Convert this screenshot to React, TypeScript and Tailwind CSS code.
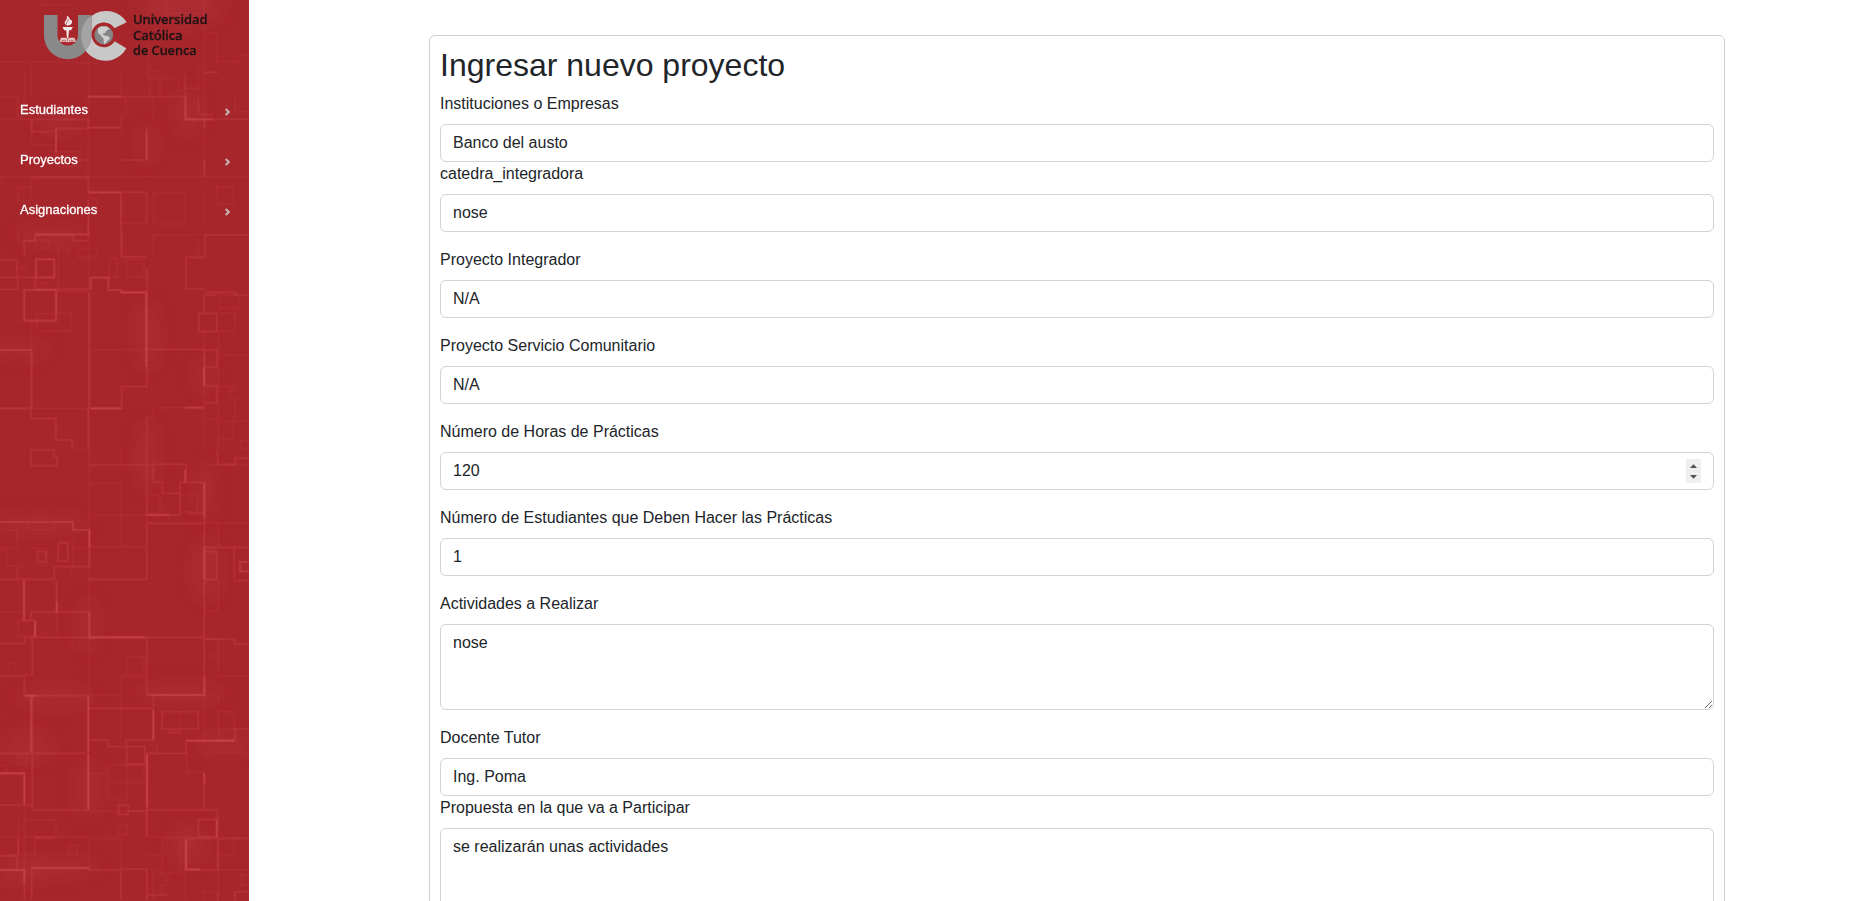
import type { ReactNode } from "react";

const TOP_LINES = [
  { o: 0.3, d: "M0 186H235V190H295M265 155V290V530M450 290V235H535V270H550M95 186V290M73 217V315M0 290H53V350H73M0 358H95M95 358V435H163M265 383H363V345H378V290M363 217V290M613 0V480M613 100H650V185H720V165H747M595 195V265H555M500 0V40H595M445 135V235M460 290V358M265 300V480M163 455H240V500H163M445 238V212H480V290M613 480V530M0 530H613M440 670H363V577M95 530V600H55V562H95M105 705H265V577M462 578H555V672H462ZM613 530H747M613 575V672M650 560H700V612H650ZM705 290V335H747M120 0V15H230M265 60V186M265 595H292V640H265M613 383V345M0 530V560" },
  { o: 0.55, d: "M555 220V358H613V383M265 290H555M440 400V480H363M265 358V383H363M105 705H265V600M555 358H747M168 386V480H265M168 386H265V358H95V395H163M265 577H440V670M595 290V320L600 345H640M95 532H265V577M363 577V720M613 480V530M613 217H655" },
  { o: 0.8, d: "M440 385V480M557 290V358H640M168 386V455M268 577H363M265 290H363" },
];
const UPPER_LINES = [
  { o: 0.3, d: "M55 0V32H105M175 38V185H265M175 55H205V82H175M235 55H292V82H235ZM110 30H145V55H110ZM328 85H352V142H328ZM380 88H432V140H380ZM460 78V15H595M595 35V82M265 0V690M95 272V535M110 250H215V304H110ZM170 180V252M363 0V80M0 535H265M265 360H440M655 375H747M655 250H705V304H655M613 304V690M655 304V655M655 470H705V482H690V508H705V573H747M655 575H700V628H655M460 533H613M460 533V563H440M722 632H747V658H722ZM613 567H655M613 662H655V690M55 115H78V95M105 160H140V178M660 195H718V235H660Z" },
  { o: 0.6, d: "M365 0V80H440M615 82V15H747M613 82H558V177H613M613 187H648M613 195V250H650V304H597V250H613M613 195H648V187H705V195H747M613 360H650V411H613V467H650V519H613M0 142H50V90H0M0 178H53V142H105V178H265M73 80V32H105V15H218V32H265M268 187V535H365V470H441V115M441 358H613V467M95 360V535M0 535H93V566H168V630H216V662H265V535M93 690V660H163V680H172M363 187H441M440 563V690" },
  { o: 1, d: "M105 13H265V0M108 88H163V142H108ZM73 180H168V272H73ZM272 180V143H325V180H363V187H437M0 360H95M438 187V410M272 535H363M555 533H610M612 411V467" },
];
const MIDDLE_LINES = [
  { o: 0.3, d: "M265 100H363V195M268 195H440M268 290H440M363 195V290M85 220V240H160V220M0 240H52V293H0M22 295V348H50V388M80 295H140V348M80 348H55V388M175 275H220V348M215 295H268M215 348V388M0 486H73M170 392V562M120 550H140M55 512H105V558H55ZM25 640H48V668H25ZM380 620H432V673H380ZM655 220V290M655 390V484H613M655 580V678H747M613 567H655M613 618H655V567M268 0V560M363 0V45M445 135H478V190H445M465 145H485V190M545 133H592V185H545M440 200V218M613 218H747M613 45H747M217 562V610M268 562V690M365 690V680H440" },
  { o: 0.6, d: "M268 45H440M440 45H460V97H487V130H540V97H558V43H460M540 130V195M440 0V195H540M440 220H613V97H555M440 220V388H268M0 388H163V350H268V240M72 388V512H105V562M93 510V486H268M170 392V486M170 562H75V580H0M97 562V675H0M170 562H613V97M440 562V690M613 562V690M613 292H747M613 305H650V388H613M703 292V392H747M613 567H703V582H747M93 0V47H172V20H163V0H93M653 0V43H705V25H747M175 280H203V333H175ZM565 190H613V218M112 305H137V335H112Z" },
  { o: 1, d: "M0 216H218V240H268V290M440 195H508M747 336H720V364H747M268 486V562H437M613 292V388M555 60V97M72 392V510M170 455V486M105 515V560M613 100V200" },
];
const LOWER_LINES = [
  { o: 0.3, d: "M268 0V75M363 20V115M363 20H435M363 115V210M265 75H363M380 0V14H432V0M655 0V18H747M613 75H655V100M655 125H702V178H655ZM655 178V210H702M613 75V210M440 250V420M560 250V307H613M613 250H747M325 285H380V390H325ZM380 285H432V337H380ZM265 310H325M330 337H378M268 423H440M268 505H363V600M268 505V600M52 255H80V280H52ZM0 285H20V310M73 405V600M55 450V555M73 450H168V500M105 500V555H0M0 500H268M205 527H232V555H205ZM487 505H540V610H487ZM540 525H555V595M440 420V500M355 466H383V493H355ZM480 595V612H503V645H485V675M460 600V690M555 600V690M440 555H487M655 505V600M655 555H702V505M540 128V178M722 615H747V645H722ZM445 225H472V250M613 693V665H655V600M655 600H747M440 500H560" },
  { o: 0.6, d: "M0 18H73V77H97M97 0V14H75M97 77V247M97 77H265V250H0M97 253V420H265V77M97 405H75M265 115H460V75M268 210H325V230H378V210H460V75H613V0M440 0V75M487 125H595V177H487ZM508 177V188H538V177M380 230H434V283H380ZM440 250H558V212H705V177H747M442 250V420H653V500M613 307V420M595 448H650V500H595ZM558 505H653V600H558ZM355 405H385V433H355ZM385 423H440V500M0 310H73V405H0M0 558H50V600H73V690M0 600H50M95 690V594H268V600H363M363 690V597H440V690M55 505V555M653 505H747M705 693V665H747M105 503H165M440 675H503M653 693V665" },
  { o: 1, d: "M75 77H110M265 80V247M440 75H613V20M441 253V410M559 212H702M0 310H73V400M0 600H73V640M95 594H265M558 508V598H600M650 450V500M265 253V420M460 120V210M613 310V340M93 80V245" },
];

const TILES = [
  { y: 0, lines: TOP_LINES },
  { y: 230, lines: UPPER_LINES },
  { y: 450, lines: MIDDLE_LINES },
  { y: 670, lines: LOWER_LINES },
];
const CLIPS = [230, 220, 220, 231];

const GLOWS = [
  [180, 5, 45, 22], [188, 112, 12, 24], [147, 145, 7, 20], [60, 122, 22, 10],
  [50, 235, 35, 9], [147, 335, 12, 36], [15, 350, 36, 8], [203, 375, 8, 18],
  [147, 455, 10, 36], [40, 523, 50, 9], [206, 490, 9, 28], [206, 570, 14, 32],
  [88, 625, 9, 28], [55, 697, 40, 10], [180, 693, 45, 9], [28, 747, 25, 14],
  [88, 790, 12, 30], [188, 845, 16, 22], [20, 872, 26, 10], [60, 867, 40, 8], [225, 745, 30, 9],
];

function Circuit() {
  return (
    <svg className="absolute inset-0" width="249" height="901" viewBox="0 0 249 901" fill="none" aria-hidden="true">
      <defs>
        <filter id="soft" x="-150%" y="-150%" width="400%" height="400%">
          <feGaussianBlur stdDeviation="9" />
        </filter>
        <filter id="line" x="-5%" y="-5%" width="110%" height="110%">
          <feGaussianBlur stdDeviation="1.2" />
        </filter>
        {TILES.map((t, i) => (
          <clipPath key={t.y} id={`tile-${i}`}>
            <rect x="0" y="0" width="747" height={CLIPS[i] * 3} />
          </clipPath>
        ))}
      </defs>
      <g filter="url(#soft)">
        {GLOWS.map(([x, y, rx, ry]) => (
          <ellipse key={`${x}-${y}`} cx={x} cy={y} rx={rx} ry={ry} fill="#c8505a" opacity="0.16" />
        ))}
      </g>
      {TILES.map((t, i) => (
        <g key={t.y} transform={`translate(0 ${t.y}) scale(0.33333)`} clipPath={`url(#tile-${i})`}>
          {t.lines.map((l) => (
            <g key={l.o} opacity={l.o * 0.38} stroke="#dc5660">
              <path d={l.d} strokeWidth="5" filter="url(#line)" />
              <path d={l.d} strokeWidth="11" opacity="0.2" />
            </g>
          ))}
        </g>
      ))}
    </svg>
  );
}

function Logo() {
  return (
    <svg className="relative block" width="249" height="70" viewBox="0 0 249 70" role="img" aria-label="Universidad Católica de Cuenca">
      <path d="M44 15H57.5V35.5A10.2 10.2 0 0 0 78 35.5V15H91.5V35.5A23.75 23.75 0 0 1 44 35.5Z" fill="#898989" />
      <path d="M126.7 22.3A24 24 0 0 0 91.5 16V35.5A23.75 23.75 0 0 1 85.5 50.5A24 24 0 0 0 126.3 48.2L114.6 41.2A12.2 12.2 0 1 1 114.2 28.2Z" fill="#c8c8c8" />
      <path d="M91.5 16V35.5A23.75 23.75 0 0 1 85.5 50.5A26 26 0 0 1 87 19.5Z" fill="#a5a3a3" />
      <circle cx="103.8" cy="34.6" r="12.2" fill="#a7272b" />
      <circle cx="103.8" cy="35" r="9.3" fill="#858585" />
      <path d="M98 28L101 26.4L107 26.6L109.5 29L106.6 30.4L105 33L102.5 33.5L104 35.6L108.5 36.2L110 38.3L106.5 42L105.3 44H103.8L103.6 39L101 35.5L98 33Z" fill="#cecece" />
      <path d="M67 25.5C61 22 69 20.5 66.5 15.5C71 18 69.5 20.5 71.5 20C73.5 23.5 70 25.8 67 25.5Z" fill="#eee4e4" />
      <path d="M67 24.5C64.5 23 69.5 21.5 68 19" stroke="#a7272b" strokeWidth=".7" fill="none" />
      <path d="M62.5 27H72.8L71 30.2H69L68.2 39H67L66.3 30.2H64.2Z" fill="#f0eaea" />
      <path d="M61 37.8H65.5L67.6 39L69.7 37.8H74.2L76 41.8H69.5L67.6 42.4L65.7 41.8H59.5Z" fill="#e6cccc" />
      <path d="M61.5 40.3H66M69.5 40.3H74M67.6 38V42" stroke="#a7272b" strokeWidth=".6" />
      <g fill="#1d1314" stroke="#1d1314" strokeWidth=".3" fontFamily="'Noto Sans', 'Open Sans', sans-serif" fontWeight="500" fontSize="12.4">
        <text x="133" y="24.4" textLength="74.5" lengthAdjust="spacingAndGlyphs">Universidad</text>
        <text x="133" y="39.8" textLength="49.5" lengthAdjust="spacingAndGlyphs">Católica</text>
        <text x="133" y="55.4" textLength="63.5" lengthAdjust="spacingAndGlyphs">de Cuenca</text>
      </g>
    </svg>
  );
}

function MenuItem({ label }: { label: string }) {
  return (
    <a className="flex h-[50px] items-center justify-between pr-[18px] pl-5 text-[13px] leading-5 text-white [-webkit-text-stroke:0.3px_white]">
      {label}
      <svg className="mt-1" width="7" height="8" viewBox="0 0 7 8" fill="none" aria-hidden="true">
        <path d="M1.7 0.9L4.8 4L1.7 7.1" stroke="#c6b4b5" strokeWidth="2.1" />
      </svg>
    </a>
  );
}

const control =
  "block w-full rounded-md border border-[#ced4da] bg-white px-3 py-1.5 text-base leading-6 text-[#212529] outline-none";

function Field({ label, tight, children }: { label: string; tight?: boolean; children: ReactNode }) {
  return (
    <div className={tight ? "" : "mb-4"}>
      <label className="mb-2 block leading-6">{label}</label>
      {children}
    </div>
  );
}

export default function App() {
  return (
    <div className="flex h-[901px] w-full overflow-hidden bg-white font-['Liberation_Sans',Arial,sans-serif] text-base text-[#212529]">
      <aside className="relative h-full w-[249px] shrink-0 overflow-hidden bg-[#a7262b]">
        <Circuit />
        <Logo />
        <nav className="relative mt-[15px]">
          <MenuItem label="Estudiantes" />
          <MenuItem label="Proyectos" />
          <MenuItem label="Asignaciones" />
        </nav>
      </aside>
      <main className="flex-1 pt-[35px] pl-[180px]">
        <form className="w-[1296px] rounded-md border border-[#cfcfd1] p-2.5">
          <h2 className="mb-2 text-[32px] leading-[38px] font-normal">Ingresar nuevo proyecto</h2>
          <Field label="Instituciones o Empresas" tight>
            <input className={control} defaultValue="Banco del austo" />
          </Field>
          <Field label="catedra_integradora">
            <input className={control} defaultValue="nose" />
          </Field>
          <Field label="Proyecto Integrador">
            <input className={control} defaultValue="N/A" />
          </Field>
          <Field label="Proyecto Servicio Comunitario">
            <input className={control} defaultValue="N/A" />
          </Field>
          <Field label="Número de Horas de Prácticas">
            <div className={`${control} flex items-center justify-between`}>
              <input className="min-w-0 flex-1 outline-none" defaultValue="120" inputMode="numeric" />
              <svg width="15" height="24" viewBox="0 0 15 24" aria-hidden="true">
                <rect width="15" height="24" fill="#efefef" />
                <path d="M4 9H11L7.5 5.2ZM4 16H11L7.5 19.8Z" fill="#505050" />
              </svg>
            </div>
          </Field>
          <Field label="Número de Estudiantes que Deben Hacer las Prácticas">
            <input className={control} defaultValue="1" />
          </Field>
          <Field label="Actividades a Realizar">
            <textarea className={`${control} h-[86px] resize-y`} defaultValue="nose" />
          </Field>
          <Field label="Docente Tutor" tight>
            <input className={control} defaultValue="Ing. Poma" />
          </Field>
          <Field label="Propuesta en la que va a Participar">
            <textarea className={`${control} h-[86px] resize-y`} defaultValue="se realizarán unas actividades" />
          </Field>
        </form>
      </main>
    </div>
  );
}
